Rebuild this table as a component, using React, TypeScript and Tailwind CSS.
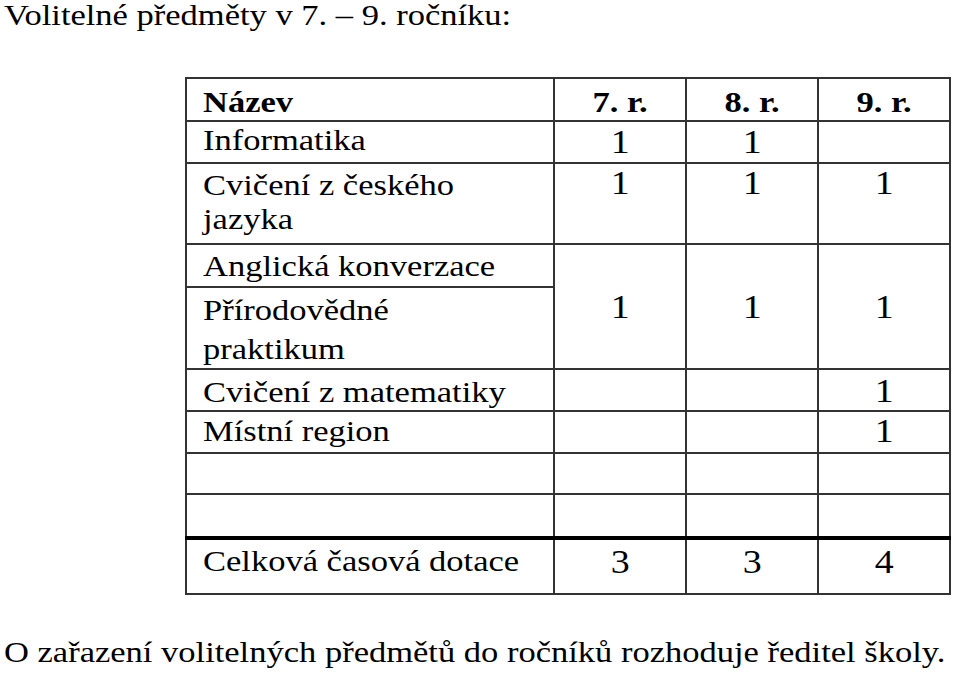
import type { ReactNode } from 'react';

// text in the source is a little wider than it is tall, so stretch it
function Txt({ children, center }: { children: ReactNode; center?: boolean }) {
  return (
    <span
      className={
        center
          ? 'inline-block whitespace-nowrap scale-x-[1.15] origin-center'
          : 'inline-block whitespace-nowrap scale-x-[1.15] origin-left'
      }
    >
      {children}
    </span>
  );
}

const nameCell = 'border-2 border-[#333] pl-[16px] align-top text-[30px] leading-[34px]';
const numCell = 'border-2 border-[#333] text-center align-top text-[33px] leading-[34px]';

export default function App() {
  return (
    <div className="min-h-screen w-[960px] bg-white text-black [font-family:Liberation_Serif,Times_New_Roman,serif]">
      {/* Title */}
      <div className="h-[77px] pl-[4px] text-[30px] leading-[30px]">
        <Txt>Volitelné předměty v 7. – 9. ročníku:</Txt>
      </div>

      {/* Table */}
      <table className="ml-[185px] w-[764px] table-fixed border-collapse">
        <colgroup>
          <col className="w-[368px]" />
          <col className="w-[132px]" />
          <col className="w-[132px]" />
          <col className="w-[132px]" />
        </colgroup>
        <tbody>
          <tr className="h-[43px] font-bold">
            <td className={`${nameCell} pt-[6px]`}>
              <Txt>Název</Txt>
            </td>
            <td className="border-2 border-[#333] pt-[6px] text-center align-top text-[30px] leading-[34px]">
              <Txt center>7. r.</Txt>
            </td>
            <td className="border-2 border-[#333] pt-[6px] text-center align-top text-[30px] leading-[34px]">
              <Txt center>8. r.</Txt>
            </td>
            <td className="border-2 border-[#333] pt-[6px] text-center align-top text-[30px] leading-[34px]">
              <Txt center>9. r.</Txt>
            </td>
          </tr>
          <tr className="h-[42px]">
            <td className={`${nameCell} pt-[1px]`}>
              <Txt>Informatika</Txt>
            </td>
            <td className={`${numCell} pt-[3px]`}>
              <Txt center>1</Txt>
            </td>
            <td className={`${numCell} pt-[3px]`}>
              <Txt center>1</Txt>
            </td>
            <td className={numCell}></td>
          </tr>
          <tr className="h-[81px]">
            <td className={`${nameCell} pt-[4px]`}>
              <Txt>
                Cvičení z českého
                <br />
                jazyka
              </Txt>
            </td>
            <td className={`${numCell} pt-[2px]`}>
              <Txt center>1</Txt>
            </td>
            <td className={`${numCell} pt-[2px]`}>
              <Txt center>1</Txt>
            </td>
            <td className={`${numCell} pt-[2px]`}>
              <Txt center>1</Txt>
            </td>
          </tr>
          <tr className="h-[43px]">
            <td className={`${nameCell} pt-[4px]`}>
              <Txt>Anglická konverzace</Txt>
            </td>
            <td rowSpan={2} className="border-2 border-[#333] text-center align-middle text-[33px] leading-[34px]">
              <Txt center>1</Txt>
            </td>
            <td rowSpan={2} className="border-2 border-[#333] text-center align-middle text-[33px] leading-[34px]">
              <Txt center>1</Txt>
            </td>
            <td rowSpan={2} className="border-2 border-[#333] text-center align-middle text-[33px] leading-[34px]">
              <Txt center>1</Txt>
            </td>
          </tr>
          <tr className="h-[82px]">
            <td className="border-2 border-[#333] pl-[16px] pt-[2px] align-top text-[30px] leading-[39px]">
              <Txt>
                Přírodovědné
                <br />
                praktikum
              </Txt>
            </td>
          </tr>
          <tr className="h-[42px]">
            <td className={`${nameCell} pt-[5px]`}>
              <Txt>Cvičení z matematiky</Txt>
            </td>
            <td className={numCell}></td>
            <td className={numCell}></td>
            <td className={`${numCell} pt-[4px]`}>
              <Txt center>1</Txt>
            </td>
          </tr>
          <tr className="h-[42px]">
            <td className={`${nameCell} pt-[2px]`}>
              <Txt>Místní region</Txt>
            </td>
            <td className={numCell}></td>
            <td className={numCell}></td>
            <td className={`${numCell} pt-[2px]`}>
              <Txt center>1</Txt>
            </td>
          </tr>
          <tr className="h-[41px]">
            <td className={nameCell}></td>
            <td className={numCell}></td>
            <td className={numCell}></td>
            <td className={numCell}></td>
          </tr>
          <tr className="h-[44px]">
            <td className={nameCell}></td>
            <td className={numCell}></td>
            <td className={numCell}></td>
            <td className={numCell}></td>
          </tr>
          <tr className="h-[56px]">
            <td className={`${nameCell} border-t-[4px] border-t-black pt-[4px]`}>
              <Txt>Celková časová dotace</Txt>
            </td>
            <td className={`${numCell} border-t-[4px] border-t-black pt-[5px]`}>
              <Txt center>3</Txt>
            </td>
            <td className={`${numCell} border-t-[4px] border-t-black pt-[5px]`}>
              <Txt center>3</Txt>
            </td>
            <td className={`${numCell} border-t-[4px] border-t-black pt-[5px]`}>
              <Txt center>4</Txt>
            </td>
          </tr>
        </tbody>
      </table>

      {/* Footnote */}
      <div className="mt-[40px] pl-[4px] text-[30px] leading-[34px]">
        <Txt>O zařazení volitelných předmětů do ročníků rozhoduje ředitel školy.</Txt>
      </div>
    </div>
  );
}
